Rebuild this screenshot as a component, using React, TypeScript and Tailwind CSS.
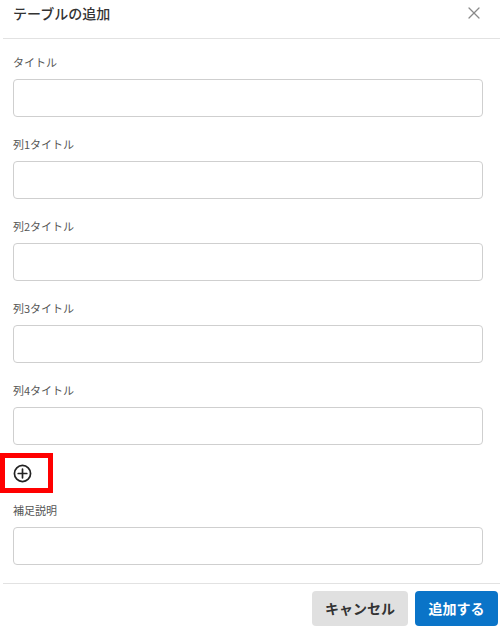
import { X } from "lucide-react";

const fields = ["タイトル", "列1タイトル", "列2タイトル", "列3タイトル", "列4タイトル"];

const Field = ({ label }: { label: string }) => (
  <div>
    <div className="h-4 text-[11px] leading-4 text-[#555]">{label}</div>
    <input
      type="text"
      className="mt-[9px] block h-[38px] w-[470px] rounded-[4px] border border-[#cfcfcf] bg-white px-2 outline-none"
    />
  </div>
);

export default function App() {
  return (
    <div
      className="flex h-[631px] w-[500px] flex-col bg-white text-[#333]"
      style={{ fontFamily: '"Noto Sans CJK JP", "Noto Sans", sans-serif' }}
    >
      {/* Header */}
      <div className="flex h-[38px] items-start justify-between pl-[13px] pr-[16px]">
        <h2 className="mt-[3px] text-[14px] font-medium leading-5 text-[#333]">テーブルの追加</h2>
        <button className="mt-[3px] text-[#8a8a8a]">
          <X size={20} strokeWidth={1.5} />
        </button>
      </div>
      <div className="ml-[3px] h-px bg-[#e2e2e2]" />

      {/* Body */}
      <div className="flex flex-col gap-[19px] px-[13px] pt-[15px]">
        {fields.map((f) => (
          <Field key={f} label={f} />
        ))}
      </div>

      {/* add column button (highlighted) */}
      <div className="mt-[8px] flex h-[40px] w-[53px] items-center border-[5px] border-[#ff0000] pl-[8px]">
        <svg width="19" height="19" viewBox="0 0 20 20" fill="none" stroke="#222" strokeWidth="1.8" strokeLinecap="round">
          <circle cx="10" cy="10" r="8.5" />
          <path d="M10 5.5v9M5.5 10h9" />
        </svg>
      </div>

      <div className="px-[13px] pt-[9px]">
        <Field label="補足説明" />
      </div>

      {/* Footer */}
      <div className="ml-[3px] mt-[18px] h-px bg-[#e2e2e2]" />
      <div className="flex justify-end gap-[7px] pr-[2px] pt-[7px]">
        <button className="h-[35px] w-[96px] rounded-[4px] bg-[#e0e0e0] text-[14px] font-bold text-[#333]">
          キャンセル
        </button>
        <button className="h-[35px] w-[83px] rounded-[4px] bg-[#0a74c8] text-[14px] font-bold text-white">
          追加する
        </button>
      </div>
    </div>
  );
}
